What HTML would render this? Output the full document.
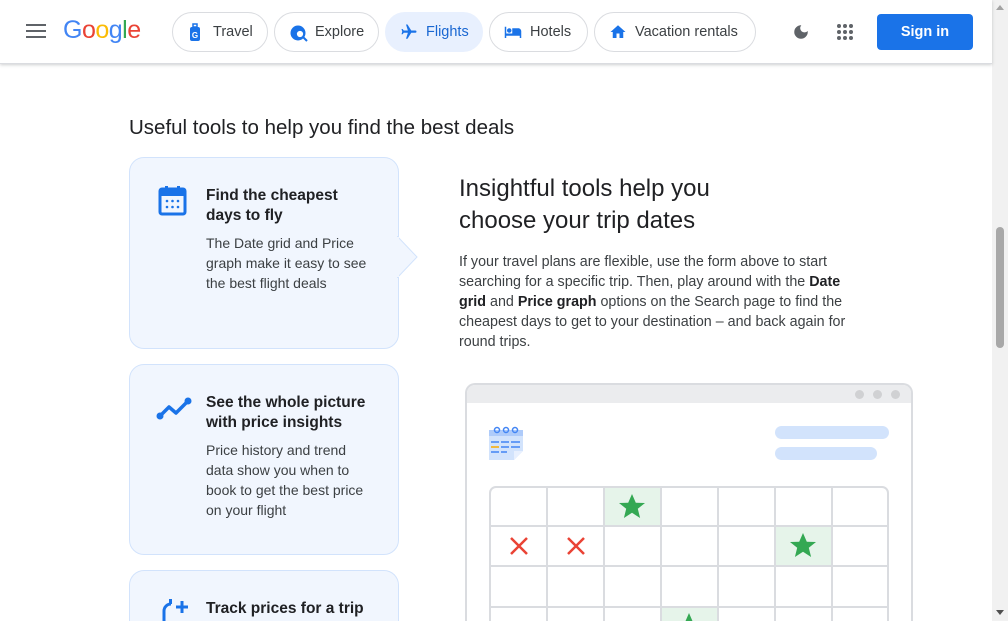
<!DOCTYPE html>
<html style="height:621px;overflow:hidden"><head><meta charset="utf-8"><style>
*{box-sizing:border-box;margin:0;padding:0}
body{width:1008px;height:621px;overflow:hidden;background:#fff;font-family:"Liberation Sans",Arial,sans-serif;color:#202124;position:relative}
.hdr{position:absolute;left:0;top:0;width:992px;height:64px;background:#fff;border-bottom:1px solid #dadce0;box-shadow:0 1px 3px rgba(60,64,67,.25);z-index:2}
.chip{position:absolute;top:12px;height:40px;border:1px solid #dadce0;border-radius:20px;font-size:14.5px;line-height:38px;color:#3c4043;padding-left:40px}
.chip svg{position:absolute;left:14px;top:10px}
.abs{position:absolute}
.card{position:absolute;left:129px;width:270px;background:#f1f6fe;border:1px solid #d2e3fc;border-radius:15px}
.card h3{position:absolute;left:76px;font-size:15.5px;font-weight:bold;line-height:20px;color:#202124;white-space:nowrap}
.card p{position:absolute;left:76px;font-size:14px;line-height:20px;color:#3c4043;white-space:nowrap}
.sb{position:absolute;right:0;top:0;width:16px;height:621px;background:#f1f1f1}
</style></head><body>
<div class="hdr">
 <div class="abs" style="left:26px;top:24px;width:20px;height:2px;background:#5f6368;box-shadow:0 6px 0 #5f6368,0 12px 0 #5f6368"></div>
 <div class="abs" style="left:63px;top:16px;font-size:25px;letter-spacing:-0.5px;font-family:'Liberation Sans',sans-serif"><span style="color:#4285f4">G</span><span style="color:#ea4335">o</span><span style="color:#fbbc05">o</span><span style="color:#4285f4">g</span><span style="color:#34a853">l</span><span style="color:#ea4335">e</span></div>
 <div class="chip" style="left:172px;width:96px"><svg width="16" height="20" viewBox="0 0 16 20"><rect x="3" y="4" width="10" height="14" rx="2" fill="#1a73e8"/><rect x="6" y="1" width="4" height="3" fill="none" stroke="#1a73e8" stroke-width="1.5"/><text x="8" y="15" font-size="8" fill="#fff" text-anchor="middle" font-weight="bold">G</text></svg>Travel</div>
 <div class="chip" style="left:274px;width:105px"><svg width="20" height="20" viewBox="0 0 20 20"><circle cx="9" cy="10" r="7.5" fill="#1a73e8"/><circle cx="11" cy="11" r="4" fill="#fff" stroke="#1a73e8" stroke-width="1.8"/><path d="M14 14l4 4" stroke="#1a73e8" stroke-width="2"/></svg>Explore</div>
 <div class="chip" style="left:385px;width:98px;background:#e8f0fe;border-color:#e8f0fe;color:#1967d2"><svg width="18" height="18" viewBox="0 0 24 24"><path fill="#1a73e8" d="M21 16v-2l-8-5V3.5a1.5 1.5 0 0 0-3 0V9l-8 5v2l8-2.5V19l-2 1.5V22l3.5-1 3.5 1v-1.5L13 19v-5.5l8 2.5z" transform="rotate(90 12 12)"/></svg>Flights</div>
 <div class="chip" style="left:489px;width:99px"><svg width="18" height="18" viewBox="0 0 24 24"><path fill="#1a73e8" d="M7 13c1.660 0 3-1.34 3-3S8.66 7 7 7s-3 1.34-3 3 1.34 3 3 3zm12-6h-8v7H3V5H1v15h2v-3h18v3h2v-9c0-2.21-1.790-4-4-4z"/></svg>Hotels</div>
 <div class="chip" style="left:594px;width:162px"><svg width="18" height="18" viewBox="0 0 24 24"><path fill="#1a73e8" d="M12 3L2 12h3v8h5v-6h4v6h5v-8h3z"/></svg>Vacation rentals</div>
 <svg class="abs" style="left:792px;top:23px" width="18" height="18" viewBox="0 0 24 24"><path fill="#5f6368" d="M12 3a9 9 0 1 0 9 9c0-.46-.04-.92-.1-1.36A5.39 5.39 0 0 1 12.36 3.1 9 9 0 0 0 12 3z"/></svg>
 <svg class="abs" style="left:836px;top:23px" width="18" height="18" viewBox="0 0 18 18" fill="#5f6368"><circle cx="3" cy="3" r="2"/><circle cx="9" cy="3" r="2"/><circle cx="15" cy="3" r="2"/><circle cx="3" cy="9" r="2"/><circle cx="9" cy="9" r="2"/><circle cx="15" cy="9" r="2"/><circle cx="3" cy="15" r="2"/><circle cx="9" cy="15" r="2"/><circle cx="15" cy="15" r="2"/></svg>
 <div class="abs" style="left:877px;top:14px;width:96px;height:36px;background:#1a73e8;border-radius:4px;color:#fff;font-weight:bold;font-size:14.5px;text-align:center;line-height:36px">Sign in</div>
</div>

<div class="abs" style="left:129px;top:116px;font-size:20.5px;color:#202124;white-space:nowrap">Useful tools to help you find the best deals</div>

<div class="card" style="top:157px;height:192px">
 <svg class="abs" style="left:28px;top:27px" width="30" height="32" viewBox="0 0 30 32"><rect x="2" y="4" width="25" height="25" rx="2" fill="none" stroke="#1a73e8" stroke-width="3"/><rect x="2" y="4" width="25" height="7" fill="#1a73e8"/><rect x="7" y="1" width="3" height="5" fill="#1a73e8"/><rect x="19" y="1" width="3" height="5" fill="#1a73e8"/><g fill="#1a73e8"><circle cx="9" cy="16" r="1.3"/><circle cx="14.5" cy="16" r="1.3"/><circle cx="20" cy="16" r="1.3"/><circle cx="9" cy="22" r="1.3"/><circle cx="14.5" cy="22" r="1.3"/><circle cx="20" cy="22" r="1.3"/></g></svg>
 <h3 style="top:28px">Find the cheapest<br>days to fly</h3>
 <p style="top:75px">The Date grid and Price<br>graph make it easy to see<br>the best flight deals</p>
</div>
<svg class="abs" style="left:397px;top:236px" width="22" height="42" viewBox="0 0 22 42"><path d="M0 0L20 21L0 42Z" fill="#f1f6fe" stroke="#d2e3fc"/><rect x="0" y="1" width="2" height="40" fill="#f1f6fe"/></svg>

<div class="card" style="top:364px;height:191px">
 <svg class="abs" style="left:26px;top:30px" width="40" height="26" viewBox="0 0 40 26"><polyline points="4,21 13,12 20,18 32,6" fill="none" stroke="#1a73e8" stroke-width="3.5" stroke-linejoin="round"/><circle cx="4" cy="21" r="3.5" fill="#1a73e8"/><circle cx="32" cy="6" r="3.5" fill="#1a73e8"/></svg>
 <h3 style="top:28px">See the whole picture<br>with price insights</h3>
 <p style="top:75px">Price history and trend<br>data show you when to<br>book to get the best price<br>on your flight</p>
</div>

<div class="card" style="top:570px;height:51px;border-bottom:none;border-radius:15px 15px 0 0">
 <svg class="abs" style="left:30px;top:26px" width="34" height="24" viewBox="0 0 34 24"><path d="M4 28V14a7 7 0 0 1 7-7" fill="none" stroke="#1a73e8" stroke-width="3"/><rect x="9" y="2" width="3" height="5" fill="#1a73e8"/><path d="M22 4v12M16 10h12" stroke="#1a73e8" stroke-width="3"/></svg>
 <h3 style="top:28px">Track prices for a trip</h3>
</div>

<div class="abs" style="left:459px;top:173px;font-size:24px;line-height:32px;color:#202124;white-space:nowrap">Insightful tools help you<br>choose your trip dates</div>
<div class="abs" style="left:459px;top:252px;font-size:14.3px;line-height:20px;color:#3c4043;white-space:nowrap">If your travel plans are flexible, use the form above to start<br>searching for a specific trip. Then, play around with the <b style="color:#202124">Date</b><br><b style="color:#202124">grid</b> and <b style="color:#202124">Price graph</b> options on the Search page to find the<br>cheapest days to get to your destination – and back again for<br>round trips.</div>

<div class="abs" style="left:465px;top:383px;width:448px;height:238px;border:2px solid #dadce0;border-bottom:none;border-radius:10px 10px 0 0;overflow:hidden;background:#fff">
 <div style="height:18px;background:#ebecee"></div>
 <div class="abs" style="left:388px;top:5px;width:9px;height:9px;border-radius:50%;background:#d0d1d3;box-shadow:18px 0 0 #d0d1d3,36px 0 0 #d0d1d3"></div>
 <svg class="abs" style="left:21px;top:41px" width="38" height="38" viewBox="0 0 38 38"><path d="M1 4h34v21l-9 9H1z" fill="#d2e3fc"/><path d="M1 4h34v6H1z" fill="#aecbfa"/><path d="M26 34v-9h9" fill="#e8f0fe"/><g fill="none" stroke="#4285f4" stroke-width="1.5"><circle cx="9" cy="4" r="2.5"/><circle cx="18" cy="4" r="2.5"/><circle cx="27" cy="4" r="2.5"/></g><g stroke="#4285f4" stroke-width="1.5"><path d="M3 16h8M13 16h8M23 16h9M13 21h8M23 21h9M3 26h8M13 26h6"/></g><path d="M3 21h8" stroke="#f9ab00" stroke-width="1.5"/></svg>
 <div class="abs" style="left:308px;top:41px;width:114px;height:13px;border-radius:7px;background:#d2e3fc"></div>
 <div class="abs" style="left:308px;top:62px;width:102px;height:13px;border-radius:7px;background:#d2e3fc"></div>
 <svg class="abs" style="left:22px;top:101px" width="400" height="135" viewBox="0 0 400 135">
  <rect x="114" y="1" width="57" height="39" fill="#e6f4ea"/><rect x="285" y="40" width="57" height="40" fill="#e6f4ea"/><rect x="171" y="120" width="57" height="40" fill="#e6f4ea"/>
  <rect x="1" y="1" width="398" height="180" rx="6" fill="none" stroke="#dadce0" stroke-width="2"/>
  <g stroke="#dadce0" stroke-width="2"><path d="M58 0v160M115 0v160M172 0v160M229 0v160M286 0v160M343 0v160M0 40h400M0 80h400M0 121h400"/></g>
  <g fill="#34a853"><path d="M0-13L3.8-4.2 13-4 5.8 1.8 8.1 11 0 5.8-8.1 11-5.8 1.8-13-4-3.8-4.2z" transform="translate(143 21)"/><path d="M0-13L3.8-4.2 13-4 5.8 1.8 8.1 11 0 5.8-8.1 11-5.8 1.8-13-4-3.8-4.2z" transform="translate(314 60)"/><path d="M0-13L3.8-4.2 13-4 5.8 1.8 8.1 11 0 5.8-8.1 11-5.8 1.8-13-4-3.8-4.2z" transform="translate(200 140)"/></g>
  <g stroke="#ea4335" stroke-width="2.5"><path d="M22 52l16 16M38 52l-16 16M79 52l16 16M95 52l-16 16"/></g>
 </svg>
</div>

<div class="sb"><div class="abs" style="left:4px;top:227px;width:8px;height:121px;background:#a8a8a8;border-radius:4px"></div>
<div class="abs" style="left:4px;top:5px;border-left:4px solid transparent;border-right:4px solid transparent;border-bottom:5px solid #a3a3a3"></div>
<div class="abs" style="left:4px;top:610px;border-left:4px solid transparent;border-right:4px solid transparent;border-top:5px solid #505050"></div></div>
</body></html>
